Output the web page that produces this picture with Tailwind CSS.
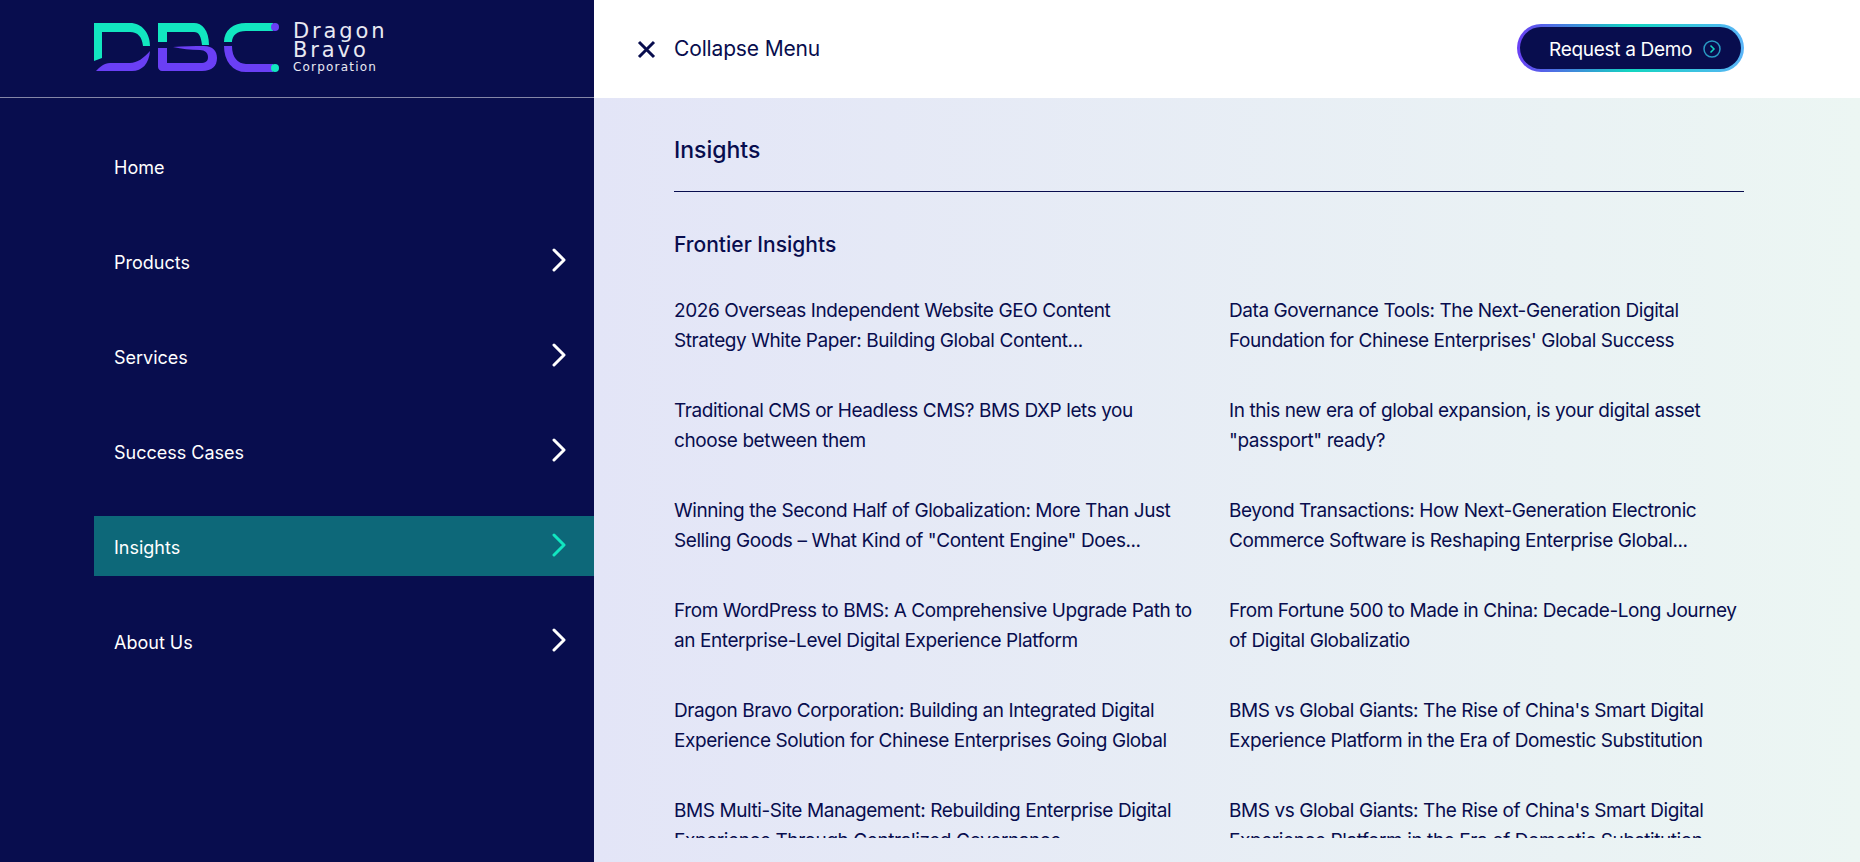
<!DOCTYPE html>
<html lang="en">

<head>
    <meta charset="UTF-8" />
    <meta name="viewport" content="width=device-width, initial-scale=1.0" />
    <title>Dragon Bravo Corporation</title>
    <script src="https://cdn.jsdelivr.net/npm/@tailwindcss/browser@4"></script>
</head>

<body class="h-[862px] overflow-hidden flex font-['Inter',sans-serif] text-[#080d4e]">

    <!-- sidebar -->
    <aside class="w-[594px] h-[862px] shrink-0 bg-[#080d4e] text-white">
        <div class="h-[98px] pl-[94px] border-b border-white/50 flex items-start">
            <svg class="mt-[21px]" width="192" height="54" viewBox="0 0 192 54" fill="none">
                <!-- D -->
                <path d="M0 2H36C48 2 56 12 56 25H49C48 16 44 11 36 11H8V37L0 40Z" fill="#12e6c0" />
                <path d="M2 50C6 46 10 42 16 42H36C43 42 50 37 56 30C55 43 48 50 38 50Z" fill="#6a3ff5" />
                <!-- B -->
                <path d="M64 2H100C108 2 115 9 115 24H108C107 15 105 11 100 11H73V21H64Z" fill="#12e6c0" />
                <path d="M64 27H73V42H106C112 42 114 40 114 36C114 32 111 29 106 29C96 29 88 28 79 26C90 25 100 25 110 25C119 25 123 30 123 37C123 45 118 50 108 50H68C66 50 64 48 64 46Z" fill="#6a3ff5" />
                <!-- C -->
                <path d="M134 21C134 12 141 6 152 6H179" stroke="#12e6c0" stroke-width="8" />
                <path d="M134 25C134 38 141 47 152 47H179" stroke="#6a3ff5" stroke-width="8" />
                <circle cx="181" cy="6" r="4" fill="#6a3ff5" />
                <circle cx="181" cy="47" r="4" fill="#12e6c0" />
            </svg>
            <div class="ml-[7px] mt-[22px] font-['DejaVu_Sans',sans-serif] text-[#e8e9f2]">
                <div class="text-[21px] leading-[19px] tracking-[2.9px]">Dragon</div>
                <div class="text-[21px] leading-[19px] tracking-[2.9px]">Bravo</div>
                <div class="text-[12px] leading-[14px] tracking-[1.2px]">Corporation</div>
            </div>
        </div>
        <nav class="pt-[38px] pl-[94px] text-[18px]">
            <a class="h-[60px] mb-[35px] pt-[2px] pl-5 pr-7 flex items-center justify-between">Home</a>
            <a class="h-[60px] mb-[35px] pt-[2px] pl-5 pr-7 flex items-center justify-between">Products
                <svg class="-mt-[4px]" width="14" height="24" viewBox="0 0 14 24" fill="none" stroke="currentColor" stroke-width="3" stroke-linecap="round" stroke-linejoin="round"><path d="M2 2L12 12L2 22" /></svg>
            </a>
            <a class="h-[60px] mb-[35px] pt-[2px] pl-5 pr-7 flex items-center justify-between">Services
                <svg class="-mt-[4px]" width="14" height="24" viewBox="0 0 14 24" fill="none" stroke="currentColor" stroke-width="3" stroke-linecap="round" stroke-linejoin="round"><path d="M2 2L12 12L2 22" /></svg>
            </a>
            <a class="h-[60px] mb-[35px] pt-[2px] pl-5 pr-7 flex items-center justify-between">Success Cases
                <svg class="-mt-[4px]" width="14" height="24" viewBox="0 0 14 24" fill="none" stroke="currentColor" stroke-width="3" stroke-linecap="round" stroke-linejoin="round"><path d="M2 2L12 12L2 22" /></svg>
            </a>
            <a class="h-[60px] mb-[35px] pt-[2px] pl-5 pr-7 flex items-center justify-between bg-[#0d6879]">Insights
                <svg class="-mt-[4px] text-[#12e6c0]" width="14" height="24" viewBox="0 0 14 24" fill="none" stroke="currentColor" stroke-width="3" stroke-linecap="round" stroke-linejoin="round"><path d="M2 2L12 12L2 22" /></svg>
            </a>
            <a class="h-[60px] mb-[35px] pt-[2px] pl-5 pr-7 flex items-center justify-between">About Us
                <svg class="-mt-[4px]" width="14" height="24" viewBox="0 0 14 24" fill="none" stroke="currentColor" stroke-width="3" stroke-linecap="round" stroke-linejoin="round"><path d="M2 2L12 12L2 22" /></svg>
            </a>
        </nav>
    </aside>

    <!-- main panel -->
    <main class="flex-1 min-w-0 flex flex-col">
        <header class="h-[98px] shrink-0 bg-white pl-[43px] pr-[116px] flex items-center justify-between">
            <div class="flex items-center gap-[18px] text-[21px] tracking-[-0.15px]">
                <svg width="19" height="19" viewBox="0 0 19 19" fill="none" stroke="#080d4e" stroke-width="3"><path d="M2 2L17 17M17 2L2 17" /></svg>
                Collapse Menu
            </div>
            <div class="w-[227px] h-[48px] -mt-[2px] rounded-full p-[3px] bg-[linear-gradient(90deg,#6a3ff5,#12d6c0_50%,#5ab4f8)]">
                <div class="h-full pt-[5px] rounded-full bg-[#080d4e] text-white text-[19px] tracking-[-0.3px] pl-[29px] flex items-center gap-[11px]">
                    Request a Demo
                    <svg class="-mt-[4px]" width="18" height="18" viewBox="0 0 18 18" fill="none">
                        <circle cx="9" cy="9" r="8" stroke="#2a9bc4" stroke-width="1.5" />
                        <path d="M7.5 5.5L11 9L7.5 12.5" stroke="#12d6c0" stroke-width="1.5" />
                    </svg>
                </div>
            </div>
        </header>

        <div class="flex-1 bg-[linear-gradient(90deg,#e3e5f7,#ecf6f3)] pl-[80px] pr-[116px] pt-[34px]">
            <h2 class="text-[23px] leading-[36px] font-medium pb-[23px] border-b border-[#080d4e]">Insights</h2>
            <h3 class="mt-[36px] text-[21px] leading-[34px] font-medium">Frontier Insights</h3>
            <div class="mt-[34px] h-[542px] overflow-hidden">
                <ul class="grid grid-cols-[520px_1fr] gap-x-[35px] gap-y-[40px] text-[19px] leading-[30px] tracking-[-0.42px]">
                    <li>2026 Overseas Independent Website GEO Content<br>Strategy White Paper: Building Global Content...</li>
                    <li>Data Governance Tools: The Next-Generation Digital Foundation for Chinese Enterprises' Global Success</li>
                    <li>Traditional CMS or Headless CMS? BMS DXP lets you choose between them</li>
                    <li>In this new era of global expansion, is your digital asset "passport" ready?</li>
                    <li>Winning the Second Half of Globalization: More Than Just Selling Goods – What Kind of "Content Engine" Does...</li>
                    <li>Beyond Transactions: How Next-Generation Electronic Commerce Software is Reshaping Enterprise Global...</li>
                    <li>From WordPress to BMS: A Comprehensive Upgrade Path to an Enterprise-Level Digital Experience Platform</li>
                    <li>From Fortune 500 to Made in China: Decade-Long Journey of Digital Globalizatio</li>
                    <li>Dragon Bravo Corporation: Building an Integrated Digital Experience Solution for Chinese Enterprises Going Global</li>
                    <li>BMS vs Global Giants: The Rise of China's Smart Digital Experience Platform in the Era of Domestic Substitution</li>
                    <li>BMS Multi-Site Management: Rebuilding Enterprise Digital Experience Through Centralized Governance</li>
                    <li>BMS vs Global Giants: The Rise of China's Smart Digital Experience Platform in the Era of Domestic Substitution</li>
                </ul>
            </div>
        </div>
    </main>
</body>

</html>
